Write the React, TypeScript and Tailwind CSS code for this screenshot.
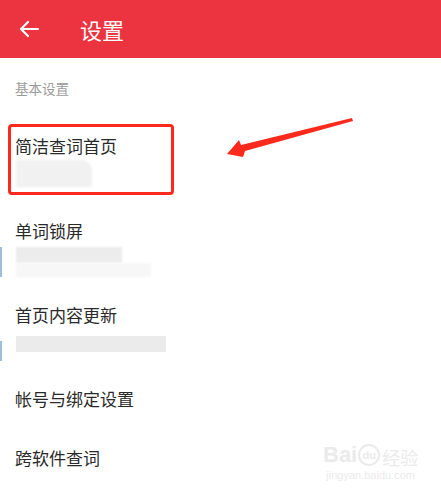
import React from "react";

const font = { fontFamily: '"Noto Sans CJK SC", "Noto Sans", sans-serif' };

function BackArrow() {
  return (
    <svg width="22" height="18" viewBox="0 0 22 18" fill="none">
      <path d="M20 9H3M10 2L3 9l7 7" stroke="white" strokeWidth="2.2" strokeLinecap="round" strokeLinejoin="round" />
    </svg>
  );
}

export default function App() {
  return (
    <div className="relative w-[441px] h-[499px] bg-white overflow-hidden" style={font}>
      <div className="h-[58px] bg-[#ec3440] flex items-center">
        <div className="ml-[18px] flex items-center"><BackArrow /></div>
        <div className="ml-[40px] text-[22px] leading-[28px] text-white">设置</div>
      </div>

      <div className="pl-[15px] mt-[20px] text-[13.5px] leading-[20px] text-[#9b9b9b]">基本设置</div>

      {/* item 1 */}
      <div className="relative mt-[36px]">
        <div className="pl-[15px] text-[17px] leading-[24px] text-[#2a2a2a]">简洁查词首页</div>
        <div className="ml-[16px] mt-[2px] w-[76px] h-[27px] bg-[#f1f1f1] rounded-tr-[10px] blur-[1px]" />
        <div className="absolute left-[8px] top-[-10px] w-[166px] h-[71px] border-[3px] border-[#fb2a1c] rounded-[4px]" />
      </div>

      {/* item 2 */}
      <div className="mt-[32px]">
        <div className="pl-[15px] text-[17px] leading-[24px] text-[#2a2a2a]">单词锁屏</div>
        <div className="flex">
          <div className="w-[2px] h-[30px] mt-[4px] bg-[#9cc0dc]" />
          <div className="ml-[14px] flex flex-col">
            <div className="w-[106px] h-[16px] mt-[4px] bg-[#ececec] blur-[1px]" />
            <div className="w-[135px] h-[14px] bg-[#f7f7f7] blur-[1px]" />
          </div>
        </div>
      </div>

      {/* item 3 */}
      <div className="mt-[26px]">
        <div className="pl-[15px] text-[17px] leading-[24px] text-[#2a2a2a]">首页内容更新</div>
        <div className="flex">
          <div className="w-[2px] h-[20px] mt-[14px] bg-[#9cc0dc]" />
          <div className="ml-[14px] w-[150px] h-[16px] mt-[9px] bg-[#ebebeb] blur-[0.5px]" />
        </div>
      </div>

      {/* item 4 */}
      <div className="mt-[26px] pl-[15px] text-[17px] leading-[24px] text-[#2a2a2a]">帐号与绑定设置</div>

      {/* item 5 */}
      <div className="mt-[35px] pl-[15px] text-[17px] leading-[24px] text-[#2a2a2a]">跨软件查词</div>

      {/* annotation arrow */}
      <svg className="absolute left-0 top-0" width="441" height="499" viewBox="0 0 441 499">
        <polygon points="352,118 353,121 245,151 243,157 227,154 239,140 241,145" fill="#fb2a1c" />
      </svg>

      {/* watermark */}
      <div className="absolute left-[323px] top-[444px] flex flex-col items-center text-[#ebebeb]">
        <div className="flex items-end leading-none">
          <span className="text-[22px] font-bold" style={{ fontFamily: '"Liberation Sans", sans-serif' }}>Bai</span>
          <span className="relative mx-[1px] w-[22px] h-[22px] rounded-full border-[2px] border-[#ebebeb] text-[11px] font-bold flex items-center justify-center" style={{ fontFamily: '"Liberation Sans", sans-serif' }}>du</span>
          <span className="text-[18px] ml-[1px]">经验</span>
        </div>
        <div className="text-[11px] leading-[14px] mt-[2px]" style={{ fontFamily: '"Liberation Sans", sans-serif' }}>jingyan.baidu.com</div>
      </div>
    </div>
  );
}
